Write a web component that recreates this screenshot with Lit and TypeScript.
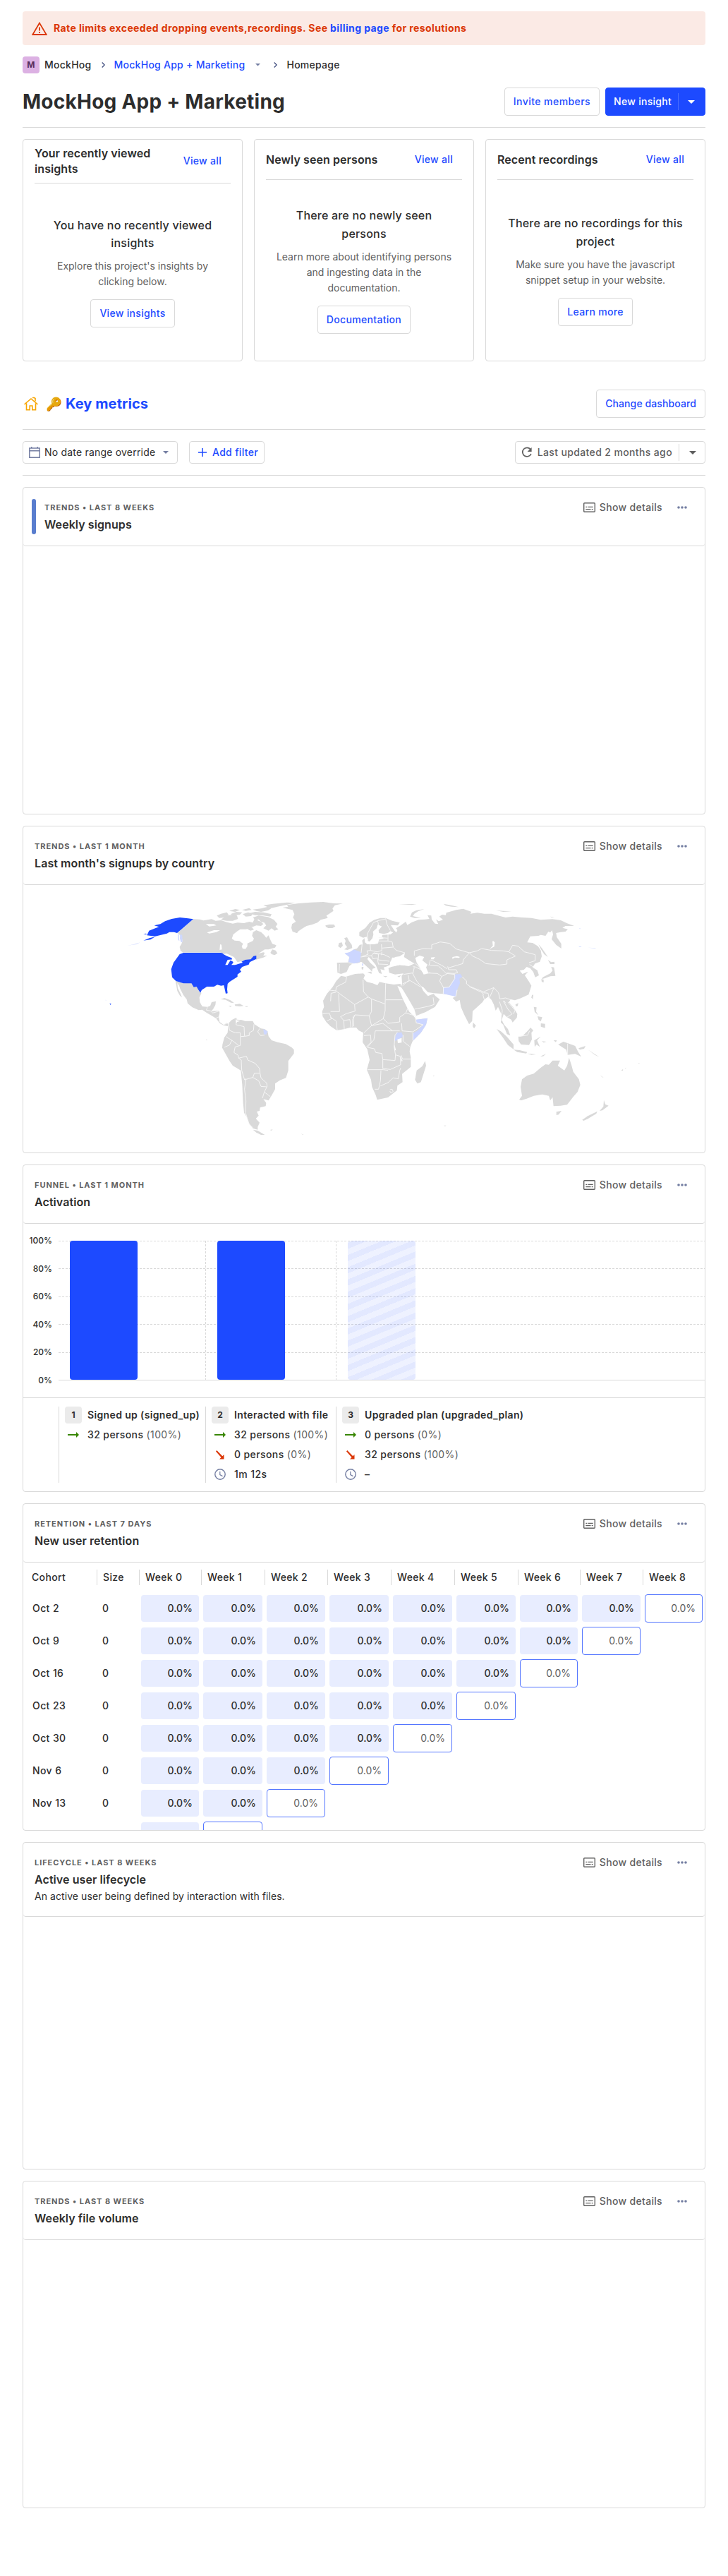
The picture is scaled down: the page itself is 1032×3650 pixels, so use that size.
import { LitElement, html, css, svg, nothing } from "lit";
import { customElement, property } from "lit/decorators.js";

const shared = css`
  *, *::before, *::after { box-sizing: border-box; }
  svg { display: block; flex: none; }
  .btn { display: inline-flex; align-items: center; height: 40px; padding: 0 12px; border: 1px solid #d9d9d9; border-radius: 4px; color: #1d4aff; font-weight: 460; white-space: nowrap; letter-spacing: 0.32px; background: #fff; }
`;

const caret = (w: number, color: string) => svg`<svg width=${w} height=${w / 2} viewBox="0 0 10 5"><path d="M0 0h10L5 5z" fill=${color}></path></svg>`;
const chevron = svg`<svg width="5" height="8" viewBox="0 0 5 8"><path d="M.7.5L4.200 4L.7 7.500" fill="none" stroke="#3d4a7c" stroke-width="1.300"></path></svg>`;

/* ---------- world map ---------- */
const LAND_WEST = [
  // Canada
  "402,157 430,158 445,163 480,157 497,164 520,162 545,170 570,176 590,172 618,174 640,168 655,172 664,152 675,150 676,163 690,168 700,178 690,186 670,184 655,190 640,188 628,200 602,200 590,208 572,222 566,240 578,248 598,250 614,262 608,272 612,283 624,284 632,272 632,260 655,250 660,240 652,228 656,212 670,204 690,212 703,224 712,236 722,226 730,245 738,262 755,268 750,278 722,286 706,286 690,296 678,304 700,298 706,300 700,312 716,312 700,320 680,326 668,330 668,316 655,318 645,330 620,330 600,345 582,340 560,318 530,304 520,300 360,300 348,292 344,275 352,262 356,250 352,232 342,222 333,214",
  "730,300 738,286 752,290 760,302 748,310 735,306",
  "502,142 520,134 545,128 552,138 540,150 512,152", "520,158 545,142 570,138 588,142 592,156 570,164 545,164 530,162",
  "560,136 585,126 610,128 600,138 575,142", "612,136 635,128 655,134 648,144 625,146",
  "656,150 680,142 720,148 745,160 760,178 752,190 764,200 748,206 735,196 722,206 700,196 712,184 704,172 690,168 680,158 664,160",
  "640,132 665,126 700,128 735,136 730,146 700,142 665,140", "655,116 690,112 720,104 735,110 720,120 690,126 670,122",
  "700,98 740,92 800,86 835,88 800,96 760,104 735,110 715,104", "628,186 650,190 660,202 645,206 630,198",
  "555,122 580,114 600,118 580,126", "610,118 640,110 650,118 625,122",
  // Greenland
  "782,108 806,104 800,97 850,90 900,86 955,84 1000,90 1038,91 1004,98 994,112 998,122 978,136 968,142 974,152 944,160 930,172 908,180 884,186 864,198 850,208 843,217 824,210 819,194 822,178 838,168 826,150 832,136 824,118 806,114",
  "964,184 980,180 1000,180 1006,188 994,195 976,195 966,190",
  // Mexico and Central America
  "326,420 340,422 360,430 392,428 404,445 416,440 428,468 437,470 428,490 430,510 440,528 462,530 474,526 480,510 498,506 496,522 486,540 478,548 512,546 514,556 510,572 514,594 530,606 545,598 552,606 548,612 530,608 515,600 498,578 478,566 460,556 440,542 425,544 398,532 378,515 374,498 360,480 346,452 342,440 334,428 336,450 346,470 354,490 345,482 334,462 330,440",
  "518,497 535,492 560,502 576,514 562,512 540,500", "578,520 600,517 616,526 600,528 580,526", "552,526 566,526 560,530", "624,527 634,527 632,530 624,530",
  // South America
  "552,600 565,586 585,576 588,584 608,586 622,590 655,590 662,604 690,622 705,624 718,634 722,655 735,672 760,680 795,688 820,702 830,712 830,728 806,760 806,800 796,832 770,842 750,856 750,880 732,912 722,928 700,922 712,938 710,952 686,958 684,972 672,975 680,992 668,1005 684,1022 676,1040 676,1052 655,1046 640,1025 630,1000 618,980 614,940 610,860 604,800 570,780 556,760 525,704 526,690 534,660 548,640 550,615",
  "656,1052 676,1056 706,1074 690,1074 670,1064", "632,985 640,1010 650,1035 640,1025 630,1000", "728,1053 740,1051 734,1056", "860,1069 872,1074 866,1073",
  "456,668 462,670 458,672",
];
const LAND_EAST = [
  // Eurasia
  "-65,385 -67,342 -20,341 -14,318 -33,303 -12,298 5,286 18,282 30,266 43,264 40,248 50,238 52,256 62,264 90,264 108,260 112,244 132,240 124,230 126,224 160,222 172,214 160,208 150,216 132,220 112,216 110,204 124,188 106,180 102,196 86,210 88,222 84,238 72,252 64,250 60,232 44,236 28,228 28,212 54,194 72,172 92,160 118,152 140,152 168,164 200,172 192,184 162,182 178,206 186,214 190,204 184,196 204,184 214,176 226,168 232,182 252,170 280,160 308,158 326,156 318,140 334,142 336,158 350,176 364,178 354,158 366,166 384,160 368,146 380,138 396,140 398,130 440,118 470,113 505,126 500,134 530,130 560,134 590,134 612,140 650,150 680,146 720,150 760,152 800,160 850,157 885,162 910,174 942,186 905,186 892,194 915,200 905,210 885,212 865,216 868,234 887,262 887,282 865,266 846,242 852,222 848,204 840,214 832,210 820,228 800,224 790,228 755,230 742,256 765,258 788,272 800,290 804,315 796,338 775,346 765,362 785,374 792,396 776,404 768,382 755,366 740,360 728,372 710,376 722,390 746,380 732,396 748,420 760,440 748,478 712,494 690,502 672,498 664,510 686,536 700,560 698,576 680,596 674,584 656,574 642,560 634,586 644,606 660,624 670,652 656,646 640,606 630,596 632,560 618,530 608,546 600,520 590,500 577,486 558,500 552,510 530,530 510,548 508,590 495,604 475,565 460,530 455,500 440,508 425,492 438,486 425,480 385,475 345,472 320,468 300,446 290,442 300,462 320,484 344,474 352,484 370,498 350,530 310,552 270,568 262,540 238,498 215,460 206,446 210,430 208,398 216,388 180,392 155,385 152,365 165,360 200,352 240,356 262,346 240,332 218,318 222,300 200,315 180,318 160,338 158,352 146,358 132,362 136,374 118,370 124,390 112,386 98,352 80,330 68,318 62,326 74,342 98,364 84,368 82,380 72,370 46,346 36,338 22,344 0,345 -14,356 -26,382 -50,390",
  // Britain, Ireland
  "-62,272 -58,258 -46,256 -42,270 -52,280", "-36,238 -24,234 -16,250 -4,266 -2,280 -22,288 -36,286 -24,276 -34,262 -30,250",
  "62,382 80,380 80,390", "38,360 46,360 44,372 38,370", "128,398 148,400 140,404", "190,400 206,396 198,404",
  // Arctic islands
  "244,146 252,128 270,120 304,114 278,124 262,134 256,144 290,152 262,152", "386,92 420,98 450,106 420,104 396,100", "610,120 640,122 676,124 640,126",
  "840,146 858,149 846,150", "196,94 272,93 250,97",
  // Japan, Sakhalin, Taiwan, Hainan, Sri Lanka
  "790,264 804,280 818,300 830,318 814,306 800,284", "830,330 844,340 858,338 858,348 840,348", "844,360 856,362 862,398 840,400 818,408 804,412 808,404 840,388 850,376", "802,412 812,414 812,426 804,424",
  "762,480 768,478 766,498 760,490", "692,520 704,514 702,526 694,528", "512,596 524,610 516,622 510,612",
  // Philippines
  "770,530 782,532 780,550 790,566 774,552", "800,600 818,602 818,620 800,614", "786,570 806,574 800,592 790,584",
  // Indonesia and Papua
  "612,624 630,634 655,656 684,690 684,710 660,692 640,662", "684,712 710,714 742,722 738,728 700,722", "704,658 722,654 744,632 756,618 768,630 760,640 762,668 750,692 716,690 706,676",
  "772,672 800,656 784,672 796,700 782,690 774,700", "744,728 780,732 760,734", "798,740 822,730 810,740", "854,672 868,672 864,680",
  "874,690 896,678 920,686 946,696 958,720 972,742 946,730 914,734 908,712 892,702", "960,706 990,696 984,708 966,712", "804,676 824,678 812,682",
  // Australia
  "708,924 720,908 714,870 720,838 742,822 770,814 800,788 820,774 834,776 850,758 882,758 872,780 900,800 912,780 920,746 930,776 938,806 962,838 968,862 956,892 938,912 912,946 884,950 854,952 850,914 840,928 834,908 806,902 770,908 740,920 716,928",
  "866,976 888,972 876,988 866,990",
  "1068,926 1074,944 1088,950 1062,970 1050,972 1066,954", "976,1010 1000,994 1040,974 1036,984 1000,1006 982,1014",
  "1142,800 1150,794 1148,802", "1052,820 1068,832 1060,828", "1000,712 1050,744 1030,734", "1214,768 1222,770 1216,771", "388,1034 398,1034 392,1038", "342,822 348,823 344,826", "1158,790 1164,788 1160,792",
  // Africa
  "-50,398 -30,402 10,390 45,388 52,395 46,410 60,424 85,430 105,438 114,424 140,430 175,435 203,432 208,448 190,440 215,500 240,550 262,572 270,585 318,578 312,605 290,640 255,675 245,700 242,720 247,745 247,785 210,815 212,850 190,865 188,885 150,915 104,925 98,905 82,870 78,840 60,797 72,755 62,710 42,680 45,640 25,630 15,618 -10,618 -38,625 -68,630 -95,612 -112,595 -128,570 -130,550 -122,530 -126,504 -110,475 -85,445 -70,420",
  "308,760 312,780 290,850 275,856 265,840 272,800 296,782",
];
const US = [
  "344,306 360,300 520,300 540,306 552,312 568,320 572,328 548,330 538,352 548,352 560,332 574,340 564,352 580,352 604,340 622,330 646,328 658,314 670,312 670,326 642,340 638,350 610,360 600,372 606,380 590,392 590,402 556,424 548,432 546,455 548,472 540,474 536,455 532,438 520,440 504,436 490,444 460,444 438,458 432,470 424,458 416,444 404,446 394,430 360,430 328,420 312,404 308,370 318,342",
  "402,157 333,216 320,212 300,212 290,218 240,230 222,228 205,226 214,206 240,196 256,190 236,184 262,178 282,166 310,156 345,150 380,154",
  "46,515 53,517 50,522", "205,222 190,222 200,218", "190,248 215,238 240,232 220,244",
];
const WEST_SPARSE = ["336,222 340,222 343,250 338,246", "346,222 355,224 356,254 350,256 345,240", "120,270 150,264 176,256 160,264", "26,500 34,504 30,501", "700,624 718,634 712,648 702,646"];
const EAST_LIGHT = [
  "-35,302 -14,298 5,286 36,298 34,318 30,340 6,346 -18,340 -14,318", "40,346 45,346 44,356 40,354",
  "434,392 458,390 466,402 454,410 456,430 444,458 438,486 420,482 385,474 384,448 410,446 424,424 432,410",
  "268,584 318,578 312,606 290,640 256,674 256,642 274,632 300,606 272,598",
  "188,640 208,638 214,654 204,664 178,676 182,656", "962,196 970,197 966,199", "960,272 974,274 966,276", "1000,278 1036,280 1030,281",
];
const SEAS_WEST = ["455,178 490,178 500,184 470,188", "460,214 490,204 516,204 500,212 470,218", "516,264 522,266 524,286 514,288", "526,304 545,304 575,318 590,340 606,336 612,342 585,350 572,342 565,322 545,314", "602,590 588,594 585,600 582,586"];
const SEAS_EAST = [
  "266,322 285,312 304,318 296,332 318,350 312,362 322,386 302,392 286,364 272,342",
  "160,342 168,320 188,322 194,332 222,326 240,346 240,356 200,352 164,358", "424,326 424,318 444,314 456,318 452,322 434,320",
  "598,250 604,256 602,274 582,284 596,270 594,252", "332,320 350,318 344,328 334,328", "190,668 208,662 208,682 192,684", "205,740 212,760 208,762",
  "178,690 184,716 178,712",
];
const BORDERS_WEST = [
  "360,300 520,300", "402,157 333,216", "462,530 458,544 478,548 484,556 512,548", "498,578 512,572", "530,606 545,600",
  "552,600 556,630 580,640 602,640 602,655", "585,580 584,606 618,614 620,655 602,656 602,694 580,700 575,724 592,735 595,748 628,740 634,756 665,770 684,792 686,812 690,832 714,854 716,868 704,892 730,912",
  "660,604 658,630 640,640 640,652 620,655", "684,622 676,636 688,652 705,650", "540,656 566,672 556,692 534,702", "566,672 595,694",
  "595,748 606,756 608,800 620,840 655,830 662,812 684,812", "655,830 680,844 690,868 714,870", "626,834 620,880 626,930 624,980 640,1030 656,1044", "704,892 696,918",
];
const BORDERS_EAST = [
  // Africa
  "-26,402 -30,425 -70,445 -72,462 -106,458", "-72,462 8,520 66,488 46,466 44,414", "-94,506 -92,472 -72,468", "-60,475 -56,550 -94,550", "8,520 10,548 -26,558 -52,572", "66,488 80,496 138,518 140,430", "140,500 212,500", "138,518 138,546 130,580 80,610",
  "80,496 80,550 70,568 10,564 2,572 4,612", "80,610 48,640", "70,568 80,610 128,600 170,632 200,632", "130,580 150,600 200,594 200,574 226,556 234,536", "226,556 266,568 270,598 300,606 256,636 210,632 208,600",
  "256,640 256,672", "214,650 214,676 242,698", "170,632 96,632 90,670 62,702 92,708 98,724 124,728 128,754 180,758 182,734 176,700 180,650 190,638", "206,736 212,752 248,752", "128,754 128,792 160,796 204,776 202,740 182,734",
  "62,797 130,797 150,800", "120,800 118,844 110,880 94,880", "118,866 150,852 172,832 194,836 200,800 204,790", "158,882 168,880 172,890 162,896 158,888", "-128,560 -100,556 -90,580 -110,590", "-66,630 -70,590 -96,574", "-36,624 -38,588 -12,584 -8,616", "-52,572 -38,588", "0,616 0,584 10,564", "48,652 76,650 78,680 58,700",
  // Europe
  "40,264 36,300", "74,264 76,290 60,292 66,306 40,316", "122,264 124,290 104,296 76,290", "124,280 172,276 168,254 150,250 150,222", "172,276 186,290 222,300", "108,250 150,250", "110,235 148,238", "34,318 80,312 90,300 122,306 134,308", "80,312 86,326 104,322 110,350", "86,302 110,306 108,330 156,336", "112,348 150,350", "134,308 158,320", "122,310 124,296", "-56,348 -58,384", "-18,342 4,347", "65,248 62,220 88,172 106,164 110,182", "140,154 146,180 160,205", "106,164 140,156",
  // Asia
  "262,346 240,344", "262,358 290,372 280,358 266,346", "256,388 262,362 255,356", "216,392 254,386 272,420 290,442", "212,432 244,418 290,446", "236,395 240,416 212,440", "330,384 306,390 290,372", "316,386 360,388 378,400 370,420 386,448 385,474", "330,354 364,356 386,376 400,390 380,400 ", "400,386 432,388 446,384 440,372 408,372 404,358", "408,364 468,346 470,330 496,300 440,284 412,260 372,254 336,266 336,284 300,282 262,292 262,312", "332,330 376,352 402,368", "330,330 324,356",
  "496,300 530,292 548,282 590,290 640,292 664,296 692,314 656,330 656,348 625,352 566,346 540,328 510,314 496,300", "664,296 680,268 704,272 730,296 776,308 776,334 750,342", "466,402 484,420 484,432 500,444 556,466 600,448 620,470 626,496 650,492 672,500", "384,448 410,446 434,410 434,392 400,388", "444,458 438,486", "496,444 552,470 556,480", "556,470 576,472 580,496", "554,480 560,500", "600,450 582,490", "624,508 636,544 632,590", "640,504 660,540 678,560 656,574", "660,510 690,544 684,560", "752,350 770,362", "262,540 320,528 346,520 342,490", "914,686 914,734", "704,656 744,650 752,632", "650,514 644,504",
];
const poly = (list: string[], fill: string) => list.map((p) => svg`<polygon points=${p} fill=${fill}></polygon>`);
const lines = (list: string[]) => list.map((p) => svg`<polyline points=${p} fill="none" stroke="#f7f7f7" stroke-width="2.800" stroke-linejoin="round"></polyline>`);

@customElement("world-map")
class WorldMap extends LitElement {
  static styles = css`:host { display: block; } svg { display: block; width: 100%; height: 379px; }`;
  render() {
    return html`<svg viewBox="-321 12 2898 1137">
      ${poly(LAND_WEST, "#d9d9d9")}
      ${lines(BORDERS_WEST)}
      ${poly(US, "#1d4aff")}
      ${poly(WEST_SPARSE, "#ced8ff")}
      ${poly(SEAS_WEST, "#fff")}
      <g transform="translate(1080 0)">
        ${poly(LAND_EAST, "#d9d9d9")}
        ${poly(EAST_LIGHT, "#ccd6ff")}
        ${lines(BORDERS_EAST)}
        ${poly(SEAS_EAST, "#fff")}
      </g>
    </svg>`;
  }
}

/* ---------- funnel ---------- */
interface Step { n: number; name: string; rows: [string, string, string][]; full: boolean; }
const STEPS: Step[] = [
  { n: 1, name: "Signed up (signed_up)", full: true, rows: [["in", "32 persons", "(100%)"]] },
  { n: 2, name: "Interacted with file", full: true, rows: [["in", "32 persons", "(100%)"], ["out", "0 persons", "(0%)"], ["time", "1m 12s", ""]] },
  { n: 3, name: "Upgraded plan (upgraded_plan)", full: false, rows: [["in", "0 persons", "(0%)"], ["out", "32 persons", "(100%)"], ["time", "–", ""]] },
];
const stepIcons: Record<string, unknown> = {
  in: svg`<svg width="16" height="8" viewBox="0 0 16 8"><path d="M0 3h12V0l4 4-4 4V5H0z" fill="#388600"></path></svg>`,
  out: svg`<svg width="12" height="13" viewBox="0 0 12 13"><path d="M1.300 0L9.300 8.200L11.500 6V12.500H5L7.500 10L0 1.400z" fill="#db3707"></path></svg>`,
  time: svg`<svg width="16" height="16" viewBox="0 0 16 16"><circle cx="8" cy="8" r="7.200" fill="none" stroke="#747ea2" stroke-width="1.400"></circle><path d="M7.800 4v4.600l3.700 2" fill="none" stroke="#747ea2" stroke-width="1.200"></path></svg>`,
};

@customElement("funnel-chart")
class FunnelChart extends LitElement {
  static styles = [shared, css`
    :host { display: block; }
    .chart { display: flex; height: 246px; padding-top: 24px; }
    .axis { width: 41px; height: 198px; display: flex; flex-direction: column; justify-content: space-between; text-align: right; font-size: 12px; font-weight: 500; }
    .axis span { height: 0; line-height: 0; }
    .plot { width: 916px; margin-left: 9px; height: 198px; display: grid; grid-template-columns: 208px 185px 1fr; background:
      repeating-linear-gradient(90deg, #d9d9d9 0 3px, transparent 3px 5px) 0 0 / 100% 1px no-repeat,
      repeating-linear-gradient(90deg, #d9d9d9 0 3px, transparent 3px 5px) 0 39px / 100% 1px no-repeat,
      repeating-linear-gradient(90deg, #d9d9d9 0 3px, transparent 3px 5px) 0 79px / 100% 1px no-repeat,
      repeating-linear-gradient(90deg, #d9d9d9 0 3px, transparent 3px 5px) 0 118px / 100% 1px no-repeat,
      repeating-linear-gradient(90deg, #d9d9d9 0 3px, transparent 3px 5px) 0 158px / 100% 1px no-repeat,
      linear-gradient(#d9d9d9, #d9d9d9) 0 197px / 100% 1px no-repeat; }
    .col { padding-left: 16px; height: 197px; }
    .col + .col { background: repeating-linear-gradient(180deg, #d9d9d9 0 3px, transparent 3px 5px) 0 0 / 1px 100% no-repeat; padding-left: 17px; }
    .bar { width: 96px; height: 197px; border-radius: 4px; background: #1d4aff; }
    .bar.empty { background: repeating-linear-gradient(-22.5deg, rgba(29,74,255,.125) 0 8px, rgba(29,74,255,.075) 8px 16px); }
    .legend { border-top: 1px solid #d9d9d9; display: grid; grid-template-columns: 208px 185px 1fr; padding: 12px 0 0 50px; }
    .step { border-left: 1px solid #d9d9d9; height: 108px; padding-left: 8px; display: flex; flex-direction: column; gap: 4px; }
    .row { display: flex; align-items: center; height: 24px; gap: 8px; white-space: nowrap; font-weight: 460; letter-spacing: 0.4px; }
    .row b { font-weight: 600; letter-spacing: 0.36px; }
    .ic { width: 24px; display: flex; justify-content: center; }
    .num { width: 24px; height: 24px; border-radius: 4px; background: #ebebeb; font-size: 12px; letter-spacing: 0; font-weight: 700; display: flex; align-items: center; justify-content: center; }
    .pct { color: #5f5f5f; font-weight: 400; }
  `];
  render() {
    return html`<div class="chart">
        <div class="axis">${[100, 80, 60, 40, 20, 0].map((v) => html`<span>${v}%</span>`)}</div>
        <div class="plot">${STEPS.map((s) => html`<div class="col"><div class="bar ${s.full ? "" : "empty"}"></div></div>`)}</div>
      </div>
      <div class="legend">${STEPS.map((s) => html`<div class="step">
        <div class="row"><span class="num">${s.n}</span><b>${s.name}</b></div>
        ${s.rows.map(([k, a, b]) => html`<div class="row"><span class="ic">${stepIcons[k]}</span><span>${a} <span class="pct">${b}</span></span></div>`)}
      </div>`)}</div>`;
  }
}

/* ---------- retention ---------- */
// The last cohort is only just visible above the fold of the card, so it has no labels.
const COHORTS = ["Oct 2", "Oct 9", "Oct 16", "Oct 23", "Oct 30", "Nov 6", "Nov 13", ""];

@customElement("retention-table")
class RetentionTable extends LitElement {
  static styles = [shared, css`
    :host { display: block; height: 379px; overflow: hidden; font-weight: 460; }
    .row { display: grid; grid-template-columns: 104px 60px 88px 90px 89px 90px 90px 90px 88px 89px 88px; height: 46px; align-items: center; }
    .head { height: 42px; letter-spacing: 0.35px; }
    .head span { height: 22px; line-height: 22px; border-left: 1px solid #d9d9d9; padding-left: 8px; }
    .head span:first-child { border: 0; padding-left: 12px; }
    .name { padding-left: 13px; letter-spacing: 0.4px; }
    .size { padding-left: 8px; }
    .cell { margin: 0 3px; height: 38px; border-radius: 4px; background: #e8edff; display: flex; align-items: center; justify-content: flex-end; padding-right: 9px; }
    .cell.last { height: 40px; background: #fff; border: 1px solid #5375ff; color: #5f5f5f; font-weight: 400; }
  `];
  render() {
    return html`<div class="row head"><span>Cohort</span><span>Size</span>${[0, 1, 2, 3, 4, 5, 6, 7, 8].map((w) => html`<span>Week ${w}</span>`)}</div>
      ${COHORTS.map((c, i) => html`<div class="row"><span class="name">${c}</span><span class="size">${c ? "0" : ""}</span>
        ${Array.from({ length: 9 - i }, (_, k) => html`<span class="cell ${k === 8 - i ? "last" : ""}">${c ? "0.0%" : ""}</span>`)}</div>`)}`;
  }
}

/* ---------- insight card ---------- */
@customElement("insight-card")
class InsightCard extends LitElement {
  @property() kind = "";
  @property() heading = "";
  @property() description = "";
  @property({ type: Boolean }) ribbon = false;
  static styles = [shared, css`
    :host { display: block; }
    .card { height: 464px; border: 1px solid #d9d9d9; border-radius: 4px; overflow: hidden; }
    .head { display: flex; height: 83px; border-bottom: 1px solid #d9d9d9; border-radius: 0 0 4px 4px; padding: 16px 16px 0 16px; }
    .head.tall { height: 105px; }
    .ribbon { width: 6px; height: 50px; border-radius: 3px; background: #597dce; margin: 0 12px 0 -4px; }
    .main { flex: 1; }
    .kind { font-size: 11px; line-height: 16px; padding-top: 4px; font-weight: 700; letter-spacing: 0.95px; color: #5f5f5f; text-transform: uppercase; }
    .title { font-size: 16px; font-weight: 600; line-height: 24px; margin-top: 4px; letter-spacing: 0.08px; }
    .desc { line-height: 22px; margin-top: 1px; letter-spacing: 0.07px; }
    .actions { display: flex; align-items: center; height: 24px; color: #5f5f5f; font-weight: 460; letter-spacing: 0.32px; }
    .actions span { margin: 0 21px 0 6px; }
    .dots { margin-right: 9px; }
  `];
  render() {
    return html`<div class="card">
      <div class="head ${this.description ? "tall" : ""}">
        ${this.ribbon ? html`<div class="ribbon"></div>` : nothing}
        <div class="main"><div class="kind">${this.kind}</div><div class="title">${this.heading}</div>
          ${this.description ? html`<div class="desc">${this.description}</div>` : nothing}</div>
        <div class="actions">
          <svg width="17" height="14" viewBox="0 0 17 14"><rect x=".7" y=".7" width="15.600" height="12.600" rx="1" fill="none" stroke="#5f5f5f" stroke-width="1.400"></rect><path d="M3.300 6.300h2M6.500 6.300h7.200M3.300 9.600h7.200M11.700 9.600h2" stroke="#5f5f5f" stroke-width="1.300"></path></svg>
          <span>Show details</span>
          <svg class="dots" width="14" height="4" viewBox="0 0 14 4"><circle cx="2" cy="2" r="1.800" fill="#747ea2"></circle><circle cx="7" cy="2" r="1.800" fill="#747ea2"></circle><circle cx="12" cy="2" r="1.800" fill="#747ea2"></circle></svg>
        </div>
      </div>
      <slot></slot>
    </div>`;
  }
}

/* ---------- page ---------- */
const LISTS = [
  { title: "Your recently viewed insights", empty: "You have no recently viewed insights", text: "Explore this project's insights by clicking below.", cta: "View insights" },
  { title: "Newly seen persons", empty: "There are no newly seen persons", text: "Learn more about identifying persons and ingesting data in the documentation.", cta: "Documentation" },
  { title: "Recent recordings", empty: "There are no recordings for this project", text: "Make sure you have the javascript snippet setup in your website.", cta: "Learn more" },
];

@customElement("app-root")
class AppRoot extends LitElement {
  static styles = [shared, css`
    :host { display: block; background: #fff; color: #2d2d2d; font: 400 14px/22px Inter, "Liberation Sans", sans-serif; min-height: 3650px; padding: 16px 32px 0; box-sizing: border-box; }
    a { color: #1d4aff; }
    .banner { height: 48px; background: #fbeae5; border-radius: 4px; display: flex; align-items: center; padding-left: 13px; gap: 9px; color: #db3707; font-weight: 700; letter-spacing: 0.4px; }
    .crumbs { display: flex; align-items: center; height: 24px; margin-top: 16px; font-weight: 460; letter-spacing: 0.26px; }
    .avatar { width: 24px; height: 24px; border-radius: 4px; background: #dcb1e3; color: #572e5e; font-size: 12px; font-weight: 700; display: flex; justify-content: center; align-items: center; margin-right: 7px; }
    .crumbs .sep { margin: 0 13px 0 14px; }
    .crumbs .drop { margin: 0 5px 0 15px; }
    .titlebar { display: flex; align-items: center; height: 76px; border-bottom: 1px solid #d9d9d9; margin-top: 1px; padding-top: 3px; }
    h1 { font-size: 28px; line-height: 40px; font-weight: 700; margin: 0; flex: 1; letter-spacing: 0.25px; }
    .titlebar .btn { margin-right: 8px; letter-spacing: 0.44px; }
    .titlebar .btn.primary { margin: 0; background: #1d4aff; border-color: #1d4aff; color: #fff; padding: 0 14px 0 11px; letter-spacing: 0.28px; }
    .bar { width: 1px; height: 24px; background: #4a6eff; margin: 0 13px 0 9px; }
    .lists { display: grid; grid-template-columns: repeat(3, 1fr); gap: 16px; margin-top: 16px; }
    .list { height: 315px; border: 1px solid #d9d9d9; border-radius: 4px; padding: 8px 16px 0; display: flex; flex-direction: column; }
    .lh { display: flex; align-items: center; border-bottom: 1px solid #d9d9d9; padding-bottom: 8px; }
    .lh b { flex: 1; font-size: 16px; line-height: 22.4px; font-weight: 600; letter-spacing: 0.08px; }
    .lh .btn { border-color: transparent; }
    .empty { flex: 1; display: flex; flex-direction: column; align-items: center; justify-content: center; text-align: center; padding: 0 12px; }
    .empty b { font-size: 16px; line-height: 25.600px; font-weight: 500; letter-spacing: 0.2px; }
    .empty p { margin: 8px 0 14px; color: #5f5f5f; }
    .dash { display: flex; align-items: center; height: 72px; margin-top: 25px; border-bottom: 1px solid #d9d9d9; padding-bottom: 1px; }
    .dash .btn { letter-spacing: 0.1px; }
    .dash h2 { flex: 1; margin: 0 0 0 9px; font-size: 20px; font-weight: 700; color: #1d4aff; letter-spacing: 0.1px; }
    .key { font-size: 18.500px; filter: hue-rotate(-14deg) saturate(1.3) brightness(0.9); }
    .filters { display: flex; align-items: center; height: 65px; border-bottom: 1px solid #d9d9d9; }
    .sm { height: 32px; padding: 0 8px; }
    .date { color: #2d2d2d; font-weight: 400; width: 220px; margin-right: 16px; letter-spacing: 0.2px; }
    .date span { flex: 1; margin-left: 6px; }
    .date svg:last-child { margin-right: 4px; }
    .add svg { margin: 0 8px 0 4px; }
    .upd { color: #5f5f5f; margin-left: auto; padding-right: 12px; letter-spacing: 0.37px; }
    .upd svg:first-child { margin-right: 7px; }
    .upd .bar { background: #d9d9d9; margin: 0 14px 0 9px; }
    .cards { display: grid; gap: 16px; margin-top: 16px; }
  `];
  render() {
    return html`
      <div class="banner"><svg width="22" height="19" viewBox="0 0 22 19"><path d="M11 1.600L20.700 18H1.300z" fill="none" stroke="#db3707" stroke-width="1.800"></path><path d="M11 7.500v5M11 14v2" stroke="#db3707" stroke-width="1.800"></path></svg>
        <span>Rate limits exceeded dropping events,recordings. See <a>billing page</a> for resolutions</span></div>
      <div class="crumbs"><span class="avatar">M</span>MockHog<span class="sep">${chevron}</span><a>MockHog App + Marketing</a><span class="drop">${caret(7, "#747ea2")}</span><span class="sep">${chevron}</span>Homepage</div>
      <div class="titlebar"><h1>MockHog App + Marketing</h1><span class="btn">Invite members</span><span class="btn primary">New insight<i class="bar"></i>${caret(10, "#fff")}</span></div>
      <div class="lists">${LISTS.map((l) => html`<div class="list"><div class="lh"><b>${l.title}</b><span class="btn">View all</span></div>
        <div class="empty"><b>${l.empty}</b><p>${l.text}</p><span class="btn">${l.cta}</span></div></div>`)}</div>
      <div class="dash">
        <svg width="24" height="24" viewBox="0 0 24 24"><path d="M2.500 13L12 5l9.500 8M5.500 11.500V20.800h4.700V15h3.600v5.800h4.700V11.500M14 3.500h2.500l1.500 1V8.500" fill="none" stroke="#f7a501" stroke-width="1.600"></path></svg>
        <h2><span class="key">🔑</span> Key metrics</h2><span class="btn">Change dashboard</span></div>
      <div class="filters">
        <span class="btn sm date"><svg width="16" height="16" viewBox="0 0 16 16"><path d="M.8 2h14.400v13.200H.8zM.8 5.700h14.400M3.700 0v2M12.300 0v2" fill="none" stroke="#747ea2" stroke-width="1.500"></path></svg><span>No date range override</span>${caret(8, "#747ea2")}</span>
        <span class="btn sm add"><svg width="12" height="12" viewBox="0 0 12 12"><path d="M6 0v12M0 6h12" stroke="#1d4aff" stroke-width="1.500"></path></svg>Add filter</span>
        <span class="btn sm upd"><svg width="16" height="16" viewBox="0 0 16 16"><path d="M12.800 3.400A6.300 6.300 0 1 0 13.900 10" fill="none" stroke="#5f5f5f" stroke-width="1.700"></path><path d="M14.600 1v6H8.600z" fill="#5f5f5f"></path></svg>Last updated 2 months ago<i class="bar"></i>${caret(10, "#5f5f5f")}</span>
      </div>
      <div class="cards">
        <insight-card kind="Trends • Last 8 weeks" heading="Weekly signups" ribbon></insight-card>
        <insight-card kind="Trends • Last 1 month" heading="Last month's signups by country"><world-map></world-map></insight-card>
        <insight-card kind="Funnel • Last 1 month" heading="Activation"><funnel-chart></funnel-chart></insight-card>
        <insight-card kind="Retention • Last 7 days" heading="New user retention"><retention-table></retention-table></insight-card>
        <insight-card kind="Lifecycle • Last 8 weeks" heading="Active user lifecycle" description="An active user being defined by interaction with files."></insight-card>
        <insight-card kind="Trends • Last 8 weeks" heading="Weekly file volume"></insight-card>
      </div>`;
  }
}
